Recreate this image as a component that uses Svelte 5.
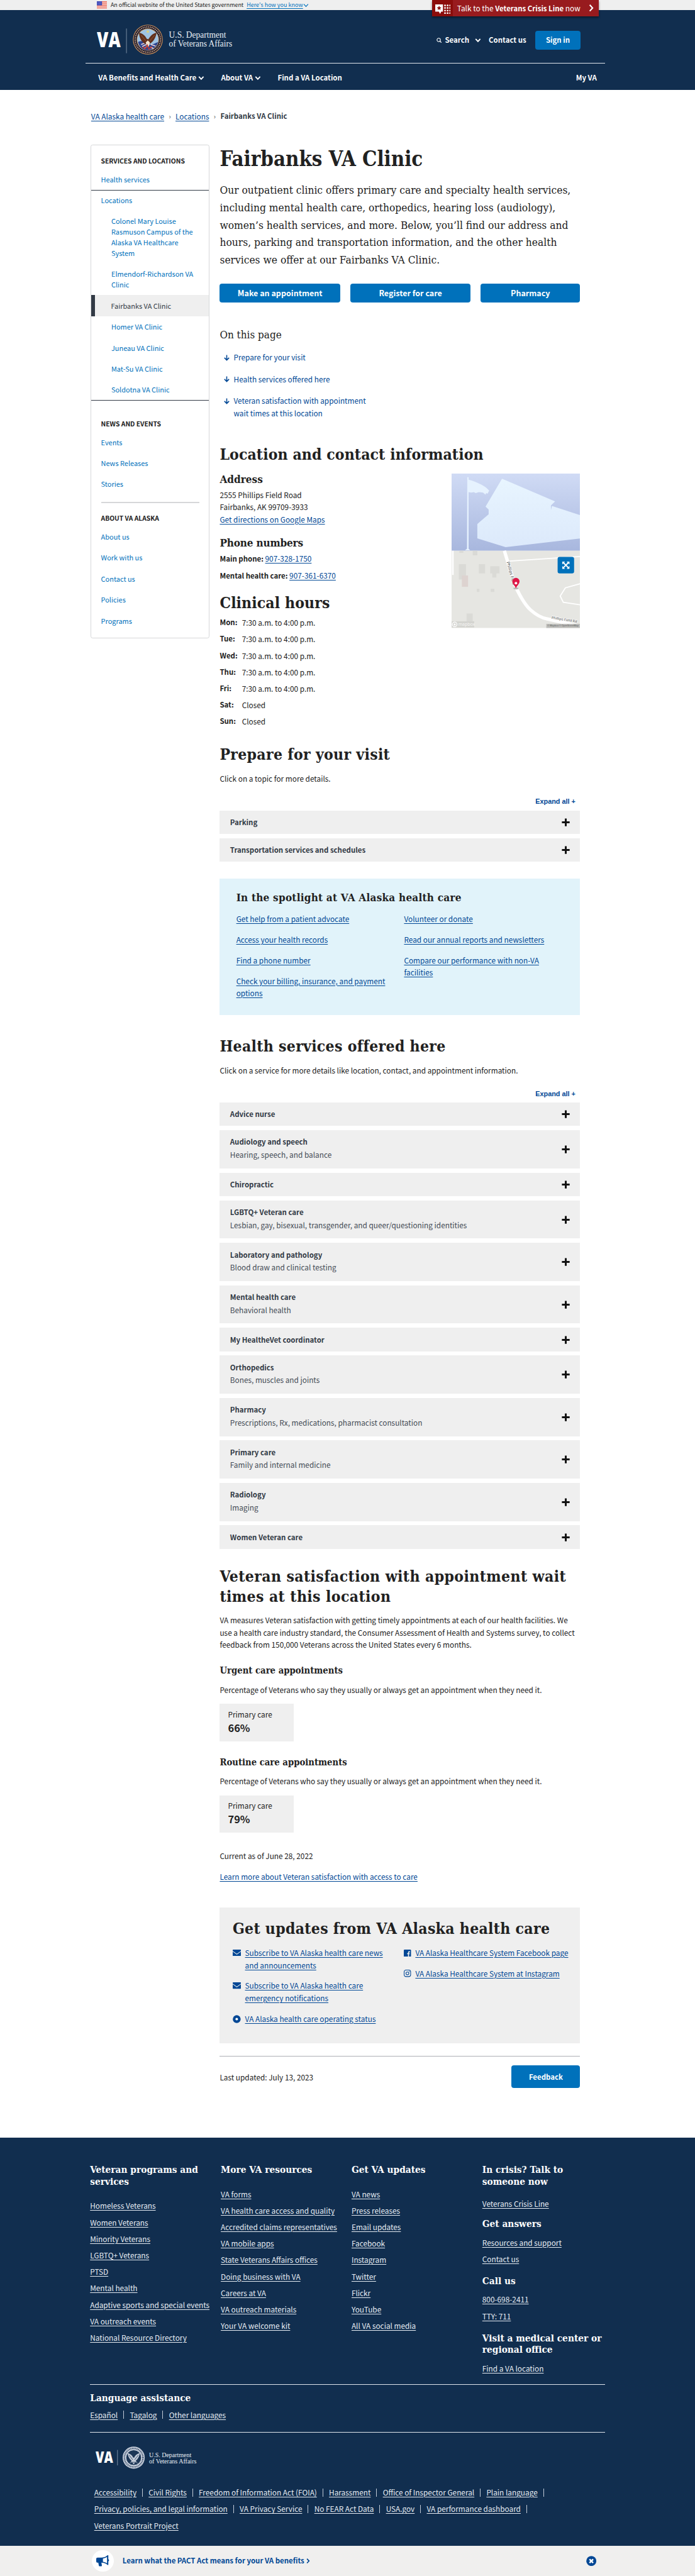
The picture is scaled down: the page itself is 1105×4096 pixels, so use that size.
<script>
  const locations = [
    'Colonel Mary Louise Rasmuson Campus of the Alaska VA Healthcare System',
    'Elmendorf-Richardson VA Clinic',
    'Fairbanks VA Clinic',
    'Homer VA Clinic',
    'Juneau VA Clinic',
    'Mat-Su VA Clinic',
    'Soldotna VA Clinic'
  ];
  const news = ['Events', 'News Releases', 'Stories'];
  const about = ['About us', 'Work with us', 'Contact us', 'Policies', 'Programs'];
  const jumps = [
    'Prepare for your visit',
    'Health services offered here',
    'Veteran satisfaction with appointment wait times at this location'
  ];
  const week = '7:30 a.m. to 4:00 p.m.';
  const hours = [
    ['Mon:', week], ['Tue:', week], ['Wed:', week], ['Thu:', week], ['Fri:', week],
    ['Sat:', 'Closed'], ['Sun:', 'Closed']
  ];
  const topics = [['Parking'], ['Transportation services and schedules']];
  const services = [
    ['Advice nurse'],
    ['Audiology and speech', 'Hearing, speech, and balance'],
    ['Chiropractic'],
    ['LGBTQ+ Veteran care', 'Lesbian, gay, bisexual, transgender, and queer/questioning identities'],
    ['Laboratory and pathology', 'Blood draw and clinical testing'],
    ['Mental health care', 'Behavioral health'],
    ['My HealtheVet coordinator'],
    ['Orthopedics', 'Bones, muscles and joints'],
    ['Pharmacy', 'Prescriptions, Rx, medications, pharmacist consultation'],
    ['Primary care', 'Family and internal medicine'],
    ['Radiology', 'Imaging'],
    ['Women Veteran care']
  ];
  const spotlight = [
    ['Get help from a patient advocate', 'Access your health records', 'Find a phone number', 'Check your billing, insurance, and payment options'],
    ['Volunteer or donate', 'Read our annual reports and newsletters', 'Compare our performance with non-VA facilities']
  ];
  const updates = [
    [['mail', 'Subscribe to VA Alaska health care news and announcements'], ['mail', 'Subscribe to VA Alaska health care emergency notifications'], ['status', 'VA Alaska health care operating status']],
    [['facebook', 'VA Alaska Healthcare System Facebook page'], ['instagram', 'VA Alaska Healthcare System at Instagram']]
  ];
  const footerColumns = [
    ['Veteran programs and services', ['Homeless Veterans', 'Women Veterans', 'Minority Veterans', 'LGBTQ+ Veterans', 'PTSD', 'Mental health', 'Adaptive sports and special events', 'VA outreach events', 'National Resource Directory']],
    ['More VA resources', ['VA forms', 'VA health care access and quality', 'Accredited claims representatives', 'VA mobile apps', 'State Veterans Affairs offices', 'Doing business with VA', 'Careers at VA', 'VA outreach materials', 'Your VA welcome kit']],
    ['Get VA updates', ['VA news', 'Press releases', 'Email updates', 'Facebook', 'Instagram', 'Twitter', 'Flickr', 'YouTube', 'All VA social media']]
  ];
  const contact = [
    ['In crisis? Talk to someone now', ['Veterans Crisis Line']],
    ['Get answers', ['Resources and support', 'Contact us']],
    ['Call us', ['800-698-2411', 'TTY: 711']],
    ['Visit a medical center or regional office', ['Find a VA location']]
  ];
  const languages = ['Español', 'Tagalog', 'Other languages'];
  const legal = [
    ['Accessibility', 'Civil Rights', 'Freedom of Information Act (FOIA)', 'Harassment', 'Office of Inspector General', 'Plain language'],
    ['Privacy, policies, and legal information', 'VA Privacy Service', 'No FEAR Act Data', 'USA.gov', 'VA performance dashboard'],
    ['Veterans Portrait Project']
  ];
  const dots = [0, 1, 2, 3].flatMap((r) => [0, 1, 2].map((c) => [19 + c * 5, 2 + r * 5]));
</script>

{#snippet chevron(size, color, width)}
  <svg class="chev" width={size} height={size} viewBox="0 0 12 12"><path d="M1.5 3.6 6 8.4l4.5-4.8" fill="none" stroke={color} stroke-width={width} /></svg>
{/snippet}

{#snippet plus()}
  <svg class="plus" width="16" height="16" viewBox="0 0 16 16"><path d="M8 .5v15M.5 8h15" stroke="#111" stroke-width="3.6" fill="none" /></svg>
{/snippet}

{#snippet accordion(items)}
  <div class="accordion">
    {#each items as [title, sub]}
      <div class="panel" class:tall={sub}>
        <div><b>{title}</b>{#if sub}<span>{sub}</span>{/if}</div>
        {@render plus()}
      </div>
    {/each}
  </div>
{/snippet}

<div class="page">
  <header>
    <div class="gov">
      <svg class="flag" width="20" height="14" viewBox="0 0 20 14">
        <rect width="20" height="14" fill="#fff" />
        <path d="M0 .6h20M0 3.2h20M0 5.8h20M0 8.4h20M0 11h20M0 13.5h20" stroke="#e8503a" stroke-width="1.3" />
        <rect width="10" height="8" fill="#3a45b5" />
        <path d="M1.5 2h7M1.5 4h7M1.5 6h7" stroke="#aab4ee" stroke-width=".8" stroke-dasharray="1 1" />
      </svg>
      <span>An official website of the United States government</span>
      <a class="how" href="#how">Here's how you know</a>
      {@render chevron(11, '#0071bc', 1.6)}
    </div>
    <a class="crisis" href="#crisis">
      <span class="crisis-icon">
        <svg width="30" height="19" viewBox="0 0 30 19">
          <path d="M0 0h15v14h-3.500l-2 4.500-2.500-4.500H0z" fill="#fff" />
          <path d="m7.500 2.500 1.300 3 3.200.200-2.500 2.100.8 3.200-2.800-1.700L4.700 11l.8-3.200L3 5.700l3.200-.2z" fill="#8b0d0b" />
          {#each dots as [x, y]}<circle cx={x} cy={y} r="1.700" fill="#fff" />{/each}
        </svg>
      </span>
      <span class="crisis-text">Talk to the <b>Veterans Crisis Line</b> now</span>
      <svg width="10" height="14" viewBox="0 0 10 14"><path d="M2 1l5.500 6L2 13" fill="none" stroke="#fff" stroke-width="2.600" /></svg>
    </a>
    <div class="brand">
      <svg class="logo" width="270" height="60" viewBox="0 0 270 60">
        <text x="0" y="45" class="va" font-size="41" textLength="46" lengthAdjust="spacingAndGlyphs">VA</text>
        <path d="M57.500 9v48" stroke="#8fa0b5" />
        <circle cx="99" cy="30.500" r="29" fill="#c9905b" />
        <circle cx="99" cy="30.500" r="27.600" fill="#171a33" />
        <circle cx="99" cy="30.500" r="24.600" fill="none" stroke="#c79a72" stroke-width="2.600" stroke-dasharray="2 1.500" />
        <circle cx="99" cy="30.500" r="21.500" fill="#d9a05f" />
        <circle cx="99" cy="30.500" r="20.500" fill="#9fc3e2" />
        <path d="M80 35c8-3 13-2 18 3s12 1 21-3c-2 8-8 15-19 16S82 44 80 35z" fill="#2e4590" />
        <path d="M86 40l8-3m-6 7 8-4m9 0 9 3m-10 2 6 3M92 48l6-5" stroke="#f0d5d5" stroke-width="2" />
        <path d="M82 17c7 1 12 6 15 12l3 1c4-7 9-12 16-13-1 8-5 16-12 21l-6 3-6-3c-6-5-10-12-10-21z" fill="#61301d" />
        <path d="M86 22l9 11m17-11-9 11" stroke="#945a37" stroke-width="1.200" />
        <circle cx="99" cy="15" r="2.500" fill="#d9cf83" />
        <path d="M95 36l4-4 4 4-2 8h-4z" fill="#f2e4d0" />
        <path d="M89 45l5 3 4-7 3 8 6-5" fill="none" stroke="#c0392f" stroke-width="2" />
        <text x="140" y="27" class="dept" font-size="17.500" textLength="111" lengthAdjust="spacingAndGlyphs">U.S. Department</text>
        <text x="140" y="44" class="dept" font-size="17.500" textLength="123" lengthAdjust="spacingAndGlyphs">of Veterans Affairs</text>
      </svg>
      <div class="tools">
        <svg class="mag" width="10" height="10" viewBox="0 0 10 10"><circle cx="4.300" cy="4.300" r="3.300" fill="none" stroke="#fff" stroke-width="1.300" /><path d="m6.700 6.700 2.800 2.800" stroke="#fff" stroke-width="1.500" /></svg>
        <b class="search">Search</b>
        {@render chevron(12, '#fff', 2.3)}
        <b class="contact">Contact us</b>
        <button class="btn signin">Sign in</button>
      </div>
    </div>
    <nav>
      <b>VA Benefits and Health Care</b>{@render chevron(12, '#fff', 2.3)}
      <b class="n2">About VA</b>{@render chevron(12, '#fff', 2.3)}
      <b class="n3">Find a VA Location</b>
      <b class="my">My VA</b>
    </nav>
  </header>

  <div class="crumbs">
    <a href="#h">VA Alaska health care</a><i>›</i><a href="#l">Locations</a><i>›</i><b>Fairbanks VA Clinic</b>
  </div>

  <div class="content">
    <aside>
      <h6>Services and locations</h6>
      <a class="item health" href="#s">Health services</a>
      <a class="item loc" href="#s">Locations</a>
      {#each locations as name}
        <a class="item sub" class:current={name === 'Fairbanks VA Clinic'} href="#s">{name}</a>
      {/each}
      <h6 class="h-news">News and events</h6>
      {#each news as name}<a class="item" href="#s">{name}</a>{/each}
      <hr />
      <h6 class="h-about">About VA Alaska</h6>
      {#each about as name}<a class="item" href="#s">{name}</a>{/each}
    </aside>

    <main>
      <h1>Fairbanks VA Clinic</h1>
      <p class="intro">Our outpatient clinic offers primary care and specialty health services, including mental health care, orthopedics, hearing loss (audiology), women’s health services, and more. Below, you’ll find our address and hours, parking and transportation information, and the other health services we offer at our Fairbanks VA Clinic.</p>
      <div class="actions">
        <button class="btn">Make an appointment</button>
        <button class="btn">Register for care</button>
        <button class="btn">Pharmacy</button>
      </div>
      <p class="toc">On this page</p>
      <ul class="jumps">
        {#each jumps as j}
          <li><svg width="11" height="12" viewBox="0 0 11 12"><path d="M5.500.5v10M1 6l4.500 4.600L10 6" fill="none" stroke="#004795" stroke-width="1.900" /></svg><a href="#j">{j}</a></li>
        {/each}
      </ul>

      <h2 class="where">Location and contact information</h2>
      <div class="contact-row">
        <div>
          <h3>Address</h3>
          <p class="addr">2555 Phillips Field Road<br />Fairbanks, AK 99709-3933<br /><a href="#g">Get directions on Google Maps</a></p>
          <h3 class="phones">Phone numbers</h3>
          <p class="phone"><b>Main phone:</b> <a href="#p">907-328-1750</a></p>
          <p class="phone"><b>Mental health care:</b> <a href="#p">907-361-6370</a></p>
          <h2 class="clinical">Clinical hours</h2>
          <dl>
            {#each hours as [d, t]}<dt>{d}</dt><dd>{t}</dd>{/each}
          </dl>
        </div>
        <svg class="map" width="250" height="300" viewBox="0 0 250 300">
          <defs>
            <linearGradient id="sky" x1="0" y1="0" x2="0" y2="1"><stop offset="0" stop-color="#d0dbf5" /><stop offset="1" stop-color="#a8b7de" /></linearGradient>
            <linearGradient id="ice" x1="0" y1="0" x2="0" y2="1"><stop offset="0" stop-color="#e8f5ff" /><stop offset="1" stop-color="#dce9fb" /></linearGradient>
          </defs>
          <rect width="250" height="150" fill="url(#sky)" />
          <path d="M98 10 201 54l-8 8v9l2-8 55 18v45l-145 17-55-17V98l22-19v-9l-6-6z" fill="url(#ice)" />
          <path d="M30.500 7h2.500v5c12 3 26 9 35 16l5 5-3 6-3-1-1 3-5-4-8-1-6 2-4-2-5 1-5-1v110l3 3h-10l4-3z" fill="#e6f2fe" />
          <rect y="150" width="250" height="150" fill="#e6e6e2" />
          <g fill="#dadad6">
            <path d="M14 176h14v30H14zM53 176h12v18H53zM75 180h18v14h-6v8h-8v-8h-4zM76 224h7v6h-7zM49 224h5v6h-5zM29 272h12v16H29zM15 150h8v4h-8zM41 150h9v9h-9z" />
            <path d="M20 198h12v22H20z" fill="#ddd3d0" />
          </g>
          <path d="M2.500 150v47" stroke="#fff" stroke-width="3" />
          <path d="m113 170 93-6 44-3M250 214l-29 8-10 16 6 12 33 5" fill="none" stroke="#fff" stroke-width="2.200" />
          <path d="M102.500 150c5 16 13 44 22 70 8 17 17 34 29 45 10 9 20 15 31 17l66 15" fill="none" stroke="#fff" stroke-width="6.500" />
          <text class="road" transform="translate(107 172) rotate(75)">Phillips Field</text>
          <text class="road end" transform="translate(194 282) rotate(9)" textLength="50" lengthAdjust="spacingAndGlyphs">Phillips Field Rd</text>
          <ellipse cx="125" cy="223" rx="5" ry="2" fill="#bbb" />
          <path d="M125 223c-2-5-7-9-7-13.500a7 7 0 0 1 14 0c0 4.500-5 8.500-7 13.500z" fill="#df1747" />
          <circle cx="125" cy="213" r="2.500" fill="#fff" />
          <rect x="206" y="162" width="32" height="32" rx="4" fill="#0071bb" />
          <path d="m216 172 12 12m0-12-12 12" stroke="#fff" stroke-width="2.400" />
          <path d="M215 171h5.500l-5.500 5.500zM229 171h-5.500l5.500 5.500zM215 185h5.500l-5.500-5.500zM229 185h-5.500l5.500-5.500z" fill="#fff" />
          <rect y="287" width="44" height="12" fill="#d4d4d0" />
          <circle cx="6" cy="293" r="4.500" fill="none" stroke="#fff" stroke-width="1.500" />
          <circle cx="6" cy="293" r="2" fill="#fff" />
          <text x="13" y="296" class="mapbox">mapbox</text>
          <rect x="184" y="292" width="66" height="8" fill="#bdbdba" />
          <text x="186" y="297.500" class="attr" textLength="61" lengthAdjust="spacingAndGlyphs">© Mapbox © OpenStreetMap</text>
        </svg>
      </div>

      <h2 class="prepare">Prepare for your visit</h2>
      <p class="lead">Click on a topic for more details.</p>
      <button class="expand">Expand all +</button>
      {@render accordion(topics)}

      <section class="spotlight">
        <h3>In the spotlight at VA Alaska health care</h3>
        <div class="cols">
          {#each spotlight as list}
            <ul>{#each list as l}<li><a href="#x">{l}</a></li>{/each}</ul>
          {/each}
        </div>
      </section>

      <h2 class="offered">Health services offered here</h2>
      <p class="lead">Click on a service for more details like location, contact, and appointment information.</p>
      <button class="expand">Expand all +</button>
      {@render accordion(services)}

      <h2 class="satisfaction">Veteran satisfaction with appointment wait times at this location</h2>
      <p class="measure">VA measures Veteran satisfaction with getting timely appointments at each of our health facilities. We use a health care industry standard, the Consumer Assessment of Health and Systems survey, to collect feedback from 150,000 Veterans across the United States every 6 months.</p>
      {#each [['Urgent', '66%'], ['Routine', '79%']] as [kind, pct]}
        <h4>{kind} care appointments</h4>
        <p class="pct">Percentage of Veterans who say they usually or always get an appointment when they need it.</p>
        <div class="card"><span>Primary care</span><b>{pct}</b></div>
      {/each}
      <p class="asof">Current as of June 28, 2022</p>
      <p class="learn"><a href="#a">Learn more about Veteran satisfaction with access to care</a></p>

      <section class="updates">
        <h2>Get updates from VA Alaska health care</h2>
        <div class="cols">
          {#each updates as list}
            <ul>
              {#each list as [icon, label]}
                <li>
                  {#if icon === 'mail'}
                    <svg width="16" height="13" viewBox="0 0 16 13"><rect width="16" height="12.500" rx="1" fill="#004795" /><path d="M0 3.200 8 9l8-5.800" fill="none" stroke="#eee" stroke-width="1.300" /></svg>
                  {:else if icon === 'status'}
                    <svg width="16" height="16" viewBox="0 0 16 16"><circle cx="7.800" cy="8" r="7.600" fill="#004795" /><circle cx="7.800" cy="8" r="2.500" fill="#fff" /></svg>
                  {:else if icon === 'facebook'}
                    <svg width="14" height="14" viewBox="0 0 14 14"><rect width="14" height="14" rx="1.500" fill="#004795" /><path d="M12 4.200H10.300c-.8 0-1.100.4-1.100 1.200V14M6.500 8h5" fill="none" stroke="#eee" stroke-width="2" /></svg>
                  {:else}
                    <svg width="14" height="14" viewBox="0 0 14 14"><rect x=".7" y=".7" width="12.600" height="12.600" rx="3.500" fill="none" stroke="#004795" stroke-width="1.300" /><circle cx="7" cy="7" r="2.800" fill="none" stroke="#004795" stroke-width="1.300" /><circle cx="10.600" cy="3.500" r=".9" fill="#004795" /></svg>
                  {/if}
                  <a href="#u">{label}</a>
                </li>
              {/each}
            </ul>
          {/each}
        </div>
      </section>
      <div class="updated">
        <span>Last updated: July 13, 2023</span>
        <button class="btn">Feedback</button>
      </div>
    </main>
  </div>

  <footer>
    <div class="wrap">
      <div class="fcols">
        {#each footerColumns as [title, links]}
          <div class="fcol">
            <h5>{title}</h5>
            {#each links as l}<a href="#f">{l}</a>{/each}
          </div>
        {/each}
        <div class="fcol reach">
          {#each contact as [title, links]}
            <h5>{title}</h5>
            {#each links as l}<a href="#f">{l}</a>{/each}
          {/each}
        </div>
      </div>
      <div class="lang">
        <h5>Language assistance</h5>
        <div class="bars">{#each languages as l}<a href="#f">{l}</a>{/each}</div>
      </div>
      <svg class="flogo" width="200" height="46" viewBox="0 0 200 46">
        <text x="0" y="33" class="va" font-size="29.500" textLength="34" lengthAdjust="spacingAndGlyphs">VA</text>
        <path d="M42.500 8v30" stroke="#8fa0b5" />
        <circle cx="74" cy="23" r="21.500" fill="#c3cbd8" />
        <circle cx="74" cy="23" r="18" fill="none" stroke="#2a4260" stroke-width="2.600" stroke-dasharray="1.500 1.500" />
        <circle cx="74" cy="23" r="15" fill="#1c3656" stroke="#dfe5ee" />
        <path d="M62 14c5 1 9 4 11 9h2c2-5 6-8 11-9-1 6-3 11-8 15l4 5-5-2-3 4-3-4-5 2 4-5c-5-4-7-9-8-15z" fill="#c3cbd8" />
        <path d="M65 18l7 9m11-9-7 9M67 32l14 0" stroke="#1c3656" stroke-width="1" />
        <text x="104" y="22" class="dept" font-size="13" textLength="82" lengthAdjust="spacingAndGlyphs">U.S. Department</text>
        <text x="104" y="34.500" class="dept" font-size="13" textLength="92" lengthAdjust="spacingAndGlyphs">of Veterans Affairs</text>
      </svg>
      <div class="legal">
        {#each legal as row, r}
          <div class="bars" class:open={r < 2}>{#each row as l}<a href="#f">{l}</a>{/each}</div>
        {/each}
      </div>
    </div>
  </footer>

  <div class="promo">
    <span class="horn">
      <svg width="26" height="22" viewBox="0 0 26 22"><path d="M0 7c0-1.500 1-2.500 2.500-2.500H10C15 4.500 19 3 22 0h1.500v7.500a2.500 2.500 0 0 1 0 4.500v7H22c-3-3-7-4.500-12-4.500l1 5.500c0 1-.5 1.500-1.500 1.500H6.800c-1 0-1.500-.5-1.700-1.300L4 14.500H2.500C1 14.500 0 13.500 0 12zM13 6.300v6.500c3 .4 5.500 1.300 8 2.800V3.500c-2.500 1.500-5 2.400-8 2.800z" fill="#004795" fill-rule="evenodd" /></svg>
    </span>
    <b>Learn what the PACT Act means for your VA benefits</b>
    <svg class="go" width="7" height="10" viewBox="0 0 7 10"><path d="M1.300.8 5.300 5l-4 4.200" fill="none" stroke="#004795" stroke-width="2" /></svg>
    <svg class="close" width="20" height="20" viewBox="0 0 20 20"><circle cx="10" cy="10" r="9.700" fill="#004795" /><path d="m6.500 6.500 7 7m0-7-7 7" stroke="#fff" stroke-width="3" /></svg>
  </div>
</div>

<style>
  :global(body) { margin: 0; background: #fff; overflow: hidden; }
  .page {
    zoom: 0.8184; width: 1350.3px; color: #212121; background: #fff;
    font: 14.45px/24px "Noto Sans CJK SC", "Noto Sans", sans-serif;
  }
  .page * { box-sizing: border-box; }
  h1, h2, h3, h4, h5, h6, p, ul, dl, dd { margin: 0; padding: 0; }
  ul { list-style: none; }
  svg { display: block; flex: none; }
  b, dt { font-weight: 700; font-size: 14px; }
  a { color: #004795; text-decoration: underline; text-underline-offset: 2px; text-decoration-thickness: 1px; }
  h1, h2, h3, h4, h5, .intro, .toc { font-family: "DejaVu Serif Condensed", "DejaVu Serif", serif; }
  .btn {
    border: 0; border-radius: 5px; background: #0071bb; color: #fff; padding: 0 0 1px;
    font: 700 15.3px "Noto Sans CJK SC", "Noto Sans", sans-serif; white-space: nowrap;
  }

  header { position: relative; height: 174.5px; background: #112e4f; color: #fff; }
  .gov { display: flex; align-items: center; height: 20px; padding-left: 188px; background: #efefef; color: #222; font-size: 10.9px; line-height: 18px; }
  .gov span { margin-left: 7px; }
  .how { margin: 0 0 0 6px; color: #0071bc; font-size: 11.05px; }
  .crisis {
    position: absolute; left: 840px; top: 0; width: 323px; height: 32px; display: flex; align-items: center;
    background: #981b1e; color: #fff; text-decoration: none; font-size: 14.5px; box-shadow: 0 2px 4px rgba(0, 0, 0, .45);
  }
  .crisis-icon { width: 40px; height: 32px; padding: 8px 0 0 5px; background: #8b0d0b; }
  .crisis-text { width: 264px; padding: 1px 0 0 8px; white-space: nowrap; }
  .brand { display: flex; justify-content: space-between; height: 102.5px; padding: 26.5px 223px 0 188px; }
  .va { font-family: "Open Sans", sans-serif; font-weight: 800; fill: #fff; }
  .dept { font-family: "Liberation Serif", serif; fill: #e9eef5; }
  .tools { display: flex; align-items: center; height: 62px; padding-top: 1px; }
  .search { margin: 0 11px 0 6px; }
  .contact { margin: 0 18px 0 15px; white-space: nowrap; }
  .signin { width: 87px; height: 36px; font-size: 14px; }
  nav { display: flex; align-items: center; height: 50px; margin: 0 175px 0 166px; padding: 6px 16px 0 25px; border-top: 2px solid #dfe5ec; }
  nav .chev { margin-left: 4px; }
  .n2 { margin-left: 32px; }
  .n3 { margin-left: 32px; }
  .my { margin-left: auto; }

  .crumbs { display: flex; margin-top: 39.2px; padding-left: 177px; }
  .crumbs i { width: 22px; text-align: center; font-style: normal; font-size: 13px; color: #555; }
  .crumbs b { color: #323a45; }
  .content { display: flex; align-items: flex-start; gap: 20px; margin-top: 43.8px; padding-left: 176px; }

  aside { width: 231px; height: 959px; padding-top: 20.7px; border: 1px solid #d6d7d9; border-radius: 4px; }
  h6 { padding-left: 19px; font: 700 12.6px/20px "Noto Sans CJK SC", sans-serif; text-transform: uppercase; }
  .item { display: block; padding: 10.2px 20px 9.8px 19px; color: #0071bb; font-size: 13.4px; line-height: 20.8px; text-decoration: none; }
  .health { margin-top: 4.8px; border-bottom: 2px solid #323a45; }
  .loc { padding: 8.6px 20px 9.3px 19px; }
  .sub { padding-left: 39px; }
  .sub.current { padding-left: 31px; border-left: 8px solid #323a45; background: #efefef; color: #323a45; }
  .h-news { margin-bottom: 5.2px; padding-top: 34.7px; border-top: 2px solid #323a45; }
  aside hr { height: 2px; margin: 14.5px 19px 0; border: 0; background: #d6d7d9; }
  .h-about { margin: 20.2px 0 4.7px; }

  main { width: 700px; }
  h1 { margin-top: 1.5px; font-size: 40px; line-height: 52px; }
  .intro { margin-top: 18px; margin-right: -10px; font-size: 21.1px; line-height: 34px; }
  .actions { display: grid; grid-template-columns: 234px 233px 193px; gap: 20px; height: 37px; margin-top: 27.8px; }
  .toc { margin-top: 50.5px; font-size: 20.7px; line-height: 26px; }
  .jumps { margin-top: 18px; }
  .jumps li { display: flex; gap: 8px; width: 310px; margin-bottom: 18px; padding-left: 8px; }
  .jumps svg { margin-top: 7px; }
  .jumps a { text-decoration: none; }
  h2 { font-size: 30px; line-height: 39px; letter-spacing: .36px; }
  h3 { font-size: 20.8px; line-height: 26px; }
  .where { margin-top: 49.2px; letter-spacing: .12px; }
  .contact-row { display: flex; justify-content: space-between; align-items: flex-start; padding-top: 16.3px; }
  .map { margin-top: 1.7px; }
  .road { font: 8px "Noto Sans", sans-serif; fill: #444; stroke: #fff; stroke-width: 1.5px; paint-order: stroke; }
  .road.end { font-size: 6.6px; }
  .mapbox { font: 8.5px "Noto Sans", sans-serif; fill: #f6f6f4; }
  .attr { font: 4.6px "Noto Sans", sans-serif; fill: #555; }
  .addr { margin-top: 4.2px; }
  .phones { margin: 21px 0 4.9px; letter-spacing: -.2px; }
  .phone { margin-bottom: 7.5px; }
  .clinical { margin-top: 21px; letter-spacing: .13px; }
  dl { display: grid; grid-template-columns: 43px auto; row-gap: 7.9px; margin-top: 7.2px; }
  .prepare { margin-top: 33.9px; }
  .lead { margin-top: 14px; }
  .expand { display: block; margin: 23.5px 9px 7.2px auto; padding: 0; border: 0; background: none; color: #004795; font: 700 13.3px/20px "Liberation Sans", sans-serif; }
  .panel { display: flex; justify-content: space-between; height: 45.6px; margin-bottom: 8.4px; padding: 11.4px 20px 0; background: #efefef; color: #323a45; }
  .panel.tall { height: 74px; margin-bottom: 8.5px; }
  .panel b, .panel span { display: block; }
  .panel span { color: #444b55; }
  .plus { margin-top: 3.8px; }
  .tall .plus { margin-top: 17.8px; }
  .spotlight { height: 266px; margin-top: 32.4px; padding: 24.7px 32px 0; background: #e1f3fa; }
  .spotlight h3 { letter-spacing: .28px; }
  .cols { display: grid; }
  .spotlight .cols { grid-template-columns: 306px 300px; column-gap: 20px; margin-top: 16px; }
  .cols li { margin-bottom: 16px; }
  .offered { margin-top: 41.6px; }
  .satisfaction { margin-top: 34.4px; margin-right: -10px; line-height: 38.6px; letter-spacing: .48px; }
  .measure { margin: 14.4px 6px 0 0; }
  h4 { margin-top: 25.7px; font-size: 18px; line-height: 24px; }
  .card + h4 { margin-top: 27.8px; }
  .pct { margin-top: 13.8px; }
  .card { display: flex; flex-direction: column; width: 144px; height: 73px; margin-top: 15.4px; padding: 8.2px 16px 0; background: #efefef; }
  .card b { margin-top: 1.6px; font-size: 20px; line-height: 26px; }
  .asof { margin-top: 32.6px; }
  .learn { margin-top: 16px; }
  .updates { height: 264px; margin-top: 48.8px; padding: 22px 0 0 25px; background: #efefef; }
  .updates .cols { grid-template-columns: 299px 330px; column-gap: 34px; margin-top: 14.4px; }
  .updates li { display: flex; gap: 8px; }
  .updates svg { margin-top: 5.5px; }
  .updated { display: flex; justify-content: space-between; align-items: center; margin-top: 24px; padding-top: 17px; border-top: 2px solid #aeb0b5; }
  .updated span { padding-top: 2px; }
  .updated .btn { width: 133px; height: 44px; font-size: 14px; }

  footer { height: 792.5px; margin-top: 97px; padding: 51px 175px 0; background: #112e4f; color: #fff; }
  footer a { color: #e6ecf3; }
  .fcols { display: grid; grid-template-columns: repeat(4, 254px); height: 427.5px; }
  h5 { font-size: 18.7px; line-height: 23px; }
  .fcol h5 { width: 235px; margin-bottom: 22.8px; }
  .fcol a { display: table; margin-bottom: 8px; white-space: nowrap; }
  .reach h5 { width: 240px; margin: 20px 0 12px; }
  .reach h5:first-child { margin: 0 0 18.7px; }
  .reach h5:nth-of-type(2) { margin-top: 16.3px; }
  .lang { height: 94px; padding-top: 15px; border: solid #dfe5ec; border-width: 2px 0; }
  .lang h5 { line-height: 24px; margin-bottom: 7.6px; }
  .bars { display: flex; }
  .bars a { position: relative; margin-right: 23.5px; white-space: nowrap; }
  .bars a:not(:last-child)::after, .open a::after { content: ""; position: absolute; right: -12px; top: 4px; width: 1px; height: 16px; background: #c3ccd8; }
  .flogo { margin: 26px 0 0 11px; }
  .legal { margin: 28.6px 0 0 8px; line-height: 32px; }
  .legal .bars a:not(:last-child)::after, .legal .open a::after { top: 8.5px; }

  .promo { display: flex; align-items: center; height: 61px; padding: 0 192px 2px 179px; background: #f0efee; }
  .horn { display: flex; align-items: center; justify-content: center; width: 42px; height: 42px; border-radius: 50%; background: #fff; }
  .promo b { margin-left: 17px; color: #004795; }
  .go { margin: 1px 0 0 4px; }
  .close { margin-left: auto; }
</style>
